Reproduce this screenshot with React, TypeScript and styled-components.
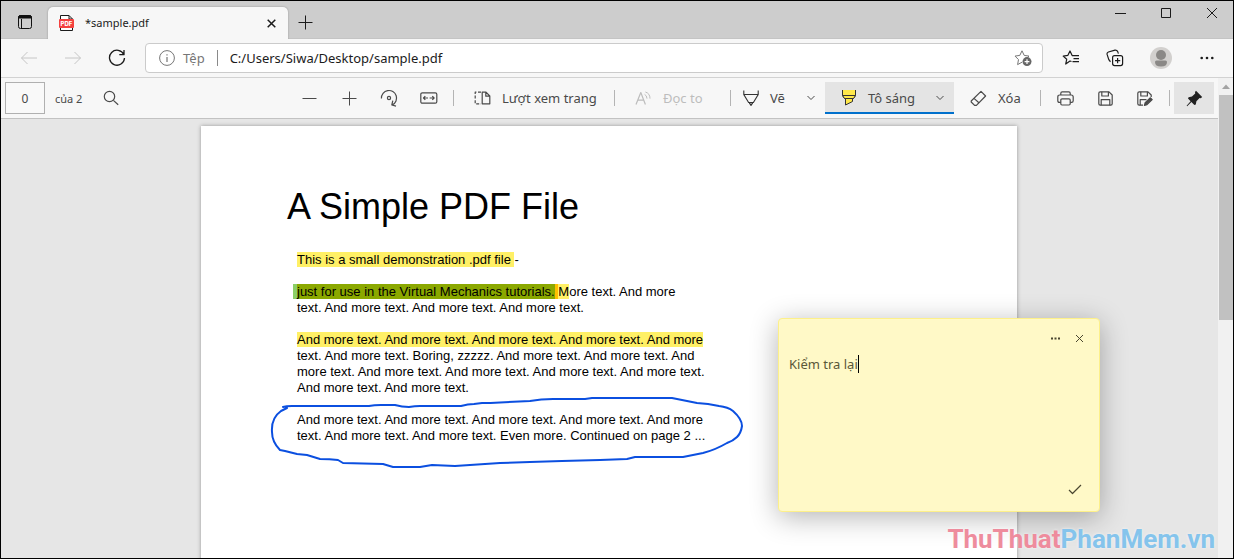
import React, { useState } from "react";
import styled, { createGlobalStyle, css } from "styled-components";

const UI_FONT = `"Noto Sans", "Open Sans", sans-serif`;
const DOC_FONT = `"Liberation Sans", Arial, sans-serif`;

const GlobalStyle = createGlobalStyle`
  * { box-sizing: border-box; }
  body { margin: 0; font-family: ${UI_FONT}; color: #1b1b1b; }
  button, input, textarea { font: inherit; color: inherit; }
`;

/* ---------- window ---------- */

const Window = styled.div`
  position: relative;
  display: flex;
  flex-direction: column;
  height: 100vh;
  overflow: hidden;
  border: 1px solid #000;
  background: #f7f7f7;
`;

const PlainButton = styled.button`
  display: flex;
  align-items: center;
  justify-content: center;
  flex: none;
  padding: 0;
  border: 0;
  background: none;
`;

const TitleBar = styled.header`
  display: flex;
  align-items: flex-end;
  height: 38px;
  background: #cdcdcd;
  border-bottom: 1px solid #c4c4c4;
`;

const TabActions = styled(PlainButton)`
  width: 47px;
  height: 32px;
`;

const Tab = styled.div`
  display: flex;
  align-items: center;
  width: 240px;
  height: 32px;
  margin-bottom: -1px;
  padding: 0 8px 0 11px;
  border-radius: 5px 5px 0 0;
  background: #f7f7f7;
  box-shadow: 0 0 2px rgba(0, 0, 0, 0.3);
  clip-path: inset(-3px -3px 0 -3px);
`;

const TabTitle = styled.span`
  flex: 1;
  margin-left: 11px;
  font-size: 11px;
  line-height: 16px;
`;

const TabClose = styled(PlainButton)`
  width: 18px;
  height: 18px;
`;

const NewTab = styled(PlainButton)`
  width: 34px;
  height: 32px;
`;

const WindowControls = styled.div`
  display: flex;
  align-self: flex-start;
  margin: 0 -2px 0 auto;
`;

const WindowButton = styled(PlainButton)`
  width: 46px;
  height: 24px;
`;

/* ---------- address row ---------- */

const AddressRow = styled.nav`
  display: flex;
  align-items: center;
  flex: none;
  height: 39px;
  padding: 0 4px 0 6px;
  border-bottom: 1px solid #d2d2d2;
`;

const NavButton = styled(PlainButton)<{ $muted?: boolean }>`
  width: 44px;
  height: 30px;
  color: ${(p) => (p.$muted ? "#c6c6c6" : "#1b1b1b")};
`;

const ProfileButton = styled(NavButton)`
  width: 48px;
`;

const AddressBox = styled.div`
  display: flex;
  align-items: center;
  flex: 1;
  min-width: 0;
  height: 30px;
  margin: 0 6px;
  padding: 0 10px 0 13px;
  border: 1px solid #cbcbcb;
  border-radius: 4px;
  background: #fff;
  font-size: 13px;
`;

const SiteInfo = styled.span`
  display: flex;
  align-items: center;
  gap: 8px;
  padding-right: 12px;
  color: #767676;
`;

const Bar = styled.span`
  width: 1px;
  height: 16px;
  background: #8a8a8a;
`;

const AddressInput = styled.input`
  flex: 1;
  min-width: 0;
  padding: 0 0 0 12px;
  border: 0;
  outline: 0;
  background: none;
`;

/* ---------- document area ---------- */

const Content = styled.div`
  display: flex;
  flex: 1;
  min-height: 0;
`;

const Reader = styled.div`
  display: flex;
  flex-direction: column;
  flex: 1;
  min-width: 0;
`;

const Toolbar = styled.div`
  display: flex;
  align-items: center;
  justify-content: space-between;
  flex: none;
  height: 41px;
  padding: 0 4px;
  border-bottom: 1px solid #c2c2c2;
  font-size: 13px;
  color: #4a4a4a;
`;

const ToolGroup = styled.div`
  display: flex;
  align-items: center;
`;

const PageNumber = styled.input`
  width: 40px;
  height: 32px;
  padding: 0;
  border: 1px solid #b0b0b0;
  background: #f9f9f9;
  font-size: 12px;
  text-align: center;
`;

const PageTotal = styled.label`
  margin: 0 9px 0 10px;
  font-size: 11px;
`;

const ToolButton = styled(PlainButton)<{
  $width?: number;
  $inset?: number;
  $disabled?: boolean;
  $active?: boolean;
  $lit?: boolean;
}>`
  justify-content: ${(p) => (p.$width ? "flex-start" : "center")};
  width: ${(p) => p.$width ?? 40}px;
  height: 32px;
  color: ${(p) => (p.$disabled ? "#bdbdbd" : "#4a4a4a")};
  background: ${(p) => (p.$lit || p.$active ? "#e4e4e4" : "none")};
  ${(p) =>
    p.$width &&
    css`
      padding: 0 9px 0 ${p.$inset ?? 16}px;
    `}
  ${(p) =>
    p.$active &&
    css`
      margin-right: 4px;
      box-shadow: inset 0 -2px #0070cc;
    `}
`;

const ToolLabel = styled.span`
  flex: 1;
  margin-left: 11px;
  text-align: left;
  white-space: nowrap;
`;

const Divider = styled.span`
  width: 1px;
  height: 16px;
  margin: 0 4px;
  background: #b4b4b4;
`;

const ScrollTrack = styled.div`
  display: flex;
  flex-direction: column;
  flex: none;
  width: 15px;
  background: #f1f1f1;
`;

const ScrollArrow = styled(PlainButton)`
  height: 17px;
`;

const ScrollThumb = styled.div`
  flex: none;
  height: 48%;
  max-height: 225px;
  margin-left: 1px;
  background: #c1c1c1;
`;

const Viewer = styled.main`
  flex: 1;
  min-height: 0;
  padding: 7px 1px 0 0;
  overflow: hidden;
  background: #e6e6e6;
`;

const Sheet = styled.article`
  position: relative;
  width: 816px;
  min-height: 1056px;
  margin: 0 auto;
  padding: 61px 86px 0;
  background: #fff;
  box-shadow: 0 0 4px rgba(0, 0, 0, 0.35);
  font-family: ${DOC_FONT};
  color: #000;
`;

const DocTitle = styled.h1`
  margin: 0 0 25px;
  font-size: 36px;
  font-weight: 400;
  line-height: 40px;
`;

const Paragraph = styled.p`
  margin: 0 0 16px 10px;
  font-size: 13px;
  line-height: 16px;
  white-space: nowrap;
`;

const marks = {
  yellow: "#fff066",
  green: "#8ba800",
  lightGreen: "#8ccf66",
  orange: "#ffbf00",
};

const Mark = styled.mark<{ $tone: keyof typeof marks }>`
  color: inherit;
  background: ${(p) => marks[p.$tone]};
`;

const GreenMark = styled(Mark)`
  margin-left: -4px;
  border-left: 4px solid ${marks.lightGreen};
`;

const Ink = styled.svg`
  position: absolute;
  left: 64px;
  top: 266px;
  pointer-events: none;
`;

/* ---------- sticky note ---------- */

const Note = styled.section`
  position: absolute;
  left: 577px;
  top: 192px;
  display: flex;
  flex-direction: column;
  width: 322px;
  height: 194px;
  padding: 8px 8px 11px 10px;
  border: 1px solid #fdf08a;
  border-radius: 4px;
  background: #fff9c7;
  box-shadow: 0 5px 28px rgba(0, 0, 0, 0.3);
  font-family: ${UI_FONT};
  color: #5a5738;
`;

const NoteActions = styled.div`
  display: flex;
  justify-content: flex-end;
`;

const NoteButton = styled(PlainButton)`
  width: 24px;
  height: 22px;
  color: #4a4730;
`;

const NoteBody = styled.div`
  display: flex;
  align-items: center;
  flex: none;
  height: 20px;
  margin-top: 5px;
`;

const NoteText = styled.textarea`
  field-sizing: content;
  padding: 0;
  border: 0;
  outline: 0;
  resize: none;
  overflow: hidden;
  background: none;
  font-size: 13px;
  line-height: 20px;
  caret-color: transparent;
`;

const Caret = styled.span`
  width: 1px;
  height: 18px;
  background: #000;
`;

const NoteFooter = styled.div`
  display: flex;
  justify-content: flex-end;
  margin-top: auto;
  padding-right: 4px;
`;

const Watermark = styled.div`
  position: absolute;
  right: 18px;
  bottom: 1px;
  font-family: Roboto, "Liberation Sans", sans-serif;
  font-size: 26px;
  font-weight: 700;
  line-height: 36px;
  color: #85c4ec;
  text-shadow: 0 0 3px rgba(255, 255, 255, 0.7);
  pointer-events: none;
`;

const WatermarkRed = styled.span`
  color: #ee8c9d;
`;

/* ---------- icons ---------- */

type IconProps = { w: number; h?: number; sw?: number; children: React.ReactNode };

const Icon = ({ w, h = w, sw = 1, children }: IconProps) => (
  <svg
    width={w}
    height={h}
    viewBox={`0 0 ${w} ${h}`}
    fill="none"
    stroke="currentColor"
    strokeWidth={sw}
    strokeLinejoin="round"
    aria-hidden="true"
  >
    {children}
  </svg>
);

const Chevron = () => (
  <Icon w={10} h={6}>
    <path d="M1.5 1L5 4.5L8.5 1" />
  </Icon>
);

const PdfIcon = () => (
  <svg width="15" height="17" viewBox="0 0 15 17" fill="none" aria-hidden="true">
    <path d="M1.5 15.5V0.5H10L13.5 4V15.5Z" fill="#fff" stroke="#1b1b1b" />
    <path d="M10 0.5V4H13.5" stroke="#1b1b1b" />
    <rect y="4" width="15" height="9" rx="1" fill="#f4413f" />
    <text
      x="7.5"
      y="11"
      fill="#fff"
      fontFamily="Inter, sans-serif"
      fontSize="6"
      fontWeight="800"
      textAnchor="middle"
    >
      PDF
    </text>
  </svg>
);

const DocumentText = () => (
  <>
    <DocTitle>A Simple PDF File</DocTitle>
    <Paragraph>
      <Mark $tone="yellow">This is a small demonstration .pdf file </Mark>-
    </Paragraph>
    <Paragraph>
      <GreenMark $tone="green">just for use in the Virtual Mechanics tutorials.</GreenMark>
      <Mark $tone="orange"> </Mark>
      <Mark $tone="yellow">M</Mark>ore text. And more
      <br />
      text. And more text. And more text. And more text.
    </Paragraph>
    <Paragraph>
      <Mark $tone="yellow">And more text. And more text. And more text. And more text. And more</Mark>
      <br />
      text. And more text. Boring, zzzzz. And more text. And more text. And
      <br />
      more text. And more text. And more text. And more text. And more text.
      <br />
      And more text. And more text.
    </Paragraph>
    <Paragraph>
      And more text. And more text. And more text. And more text. And more
      <br />
      text. And more text. And more text. Even more. Continued on page 2 ...
    </Paragraph>
  </>
);

const InkLoop = () => (
  <Ink width="484" height="80" viewBox="265 392 484 80" fill="none" aria-hidden="true">
    <path
      d="M283 407Q286 406 292 406H369Q374 405 381 405H395Q402 407 409 407Q415 406 420 406H461Q468 404 474 404L482 403Q490 403 500 402.5L530 401Q541 399 553 399H585L592 398H672L697 403L708 404L719 406Q728 407 733 411Q742 419 742 426Q741 433 737 437Q733 441 727 443Q715 450 703 453L683 457H635L627 459L600 460L562 461L530 462L500 463L455 466L432 465L420 467H393L383 464L343 463L338 460Q330 459 320 459L307 455L297 454L285 451L280 450Q272 442 272 432Q271 418 281 411L287 408"
      stroke="#0b4fe0"
      strokeWidth="2"
      strokeLinecap="round"
      strokeLinejoin="round"
    />
  </Ink>
);

/* ---------- app ---------- */

export default function App() {
  const [address, setAddress] = useState("C:/Users/Siwa/Desktop/sample.pdf");
  const [page, setPage] = useState("0");
  const [note, setNote] = useState("Kiểm tra lại");

  return (
    <>
      <GlobalStyle />
      <Window>
        <TitleBar>
          <TabActions aria-label="Tab actions">
            <Icon w={16} sw={1}>
              <rect x="1.5" y="1.5" width="13" height="13" rx="2" stroke="#111" />
              <path d="M1.5 4V3.5a2 2 0 0 1 2-2h9a2 2 0 0 1 2 2V4Z" fill="#111" stroke="#111" />
              <path d="M4.5 5V14.5" stroke="#111" />
            </Icon>
          </TabActions>
          <Tab>
            <PdfIcon />
            <TabTitle>*sample.pdf</TabTitle>
            <TabClose aria-label="Close tab">
              <Icon w={9} sw={1.5}>
                <path d="M0.7 0.7L8.3 8.3M8.3 0.7L0.7 8.3" />
              </Icon>
            </TabClose>
          </Tab>
          <NewTab aria-label="New tab">
            <Icon w={15}>
              <path d="M7.5 0.5V14.5M0.5 7.5H14.5" />
            </Icon>
          </NewTab>
          <WindowControls>
            <WindowButton aria-label="Minimize">
              <Icon w={11}>
                <path d="M0 5.5H11" />
              </Icon>
            </WindowButton>
            <WindowButton aria-label="Maximize">
              <Icon w={10}>
                <path d="M0.5 0.5H9.5V9.5H0.5Z" />
              </Icon>
            </WindowButton>
            <WindowButton aria-label="Close">
              <Icon w={12}>
                <path d="M1 1L11 11M11 1L1 11" />
              </Icon>
            </WindowButton>
          </WindowControls>
        </TitleBar>

        <AddressRow>
          <NavButton $muted aria-label="Back">
            <Icon w={18} h={14}>
              <path d="M17 7H1.5M7.5 1L1.5 7L7.5 13" />
            </Icon>
          </NavButton>
          <NavButton $muted aria-label="Forward">
            <Icon w={18} h={14}>
              <path d="M1 7H16.5M10.5 1L16.5 7L10.5 13" />
            </Icon>
          </NavButton>
          <NavButton aria-label="Refresh">
            <Icon w={18} sw={1.3}>
              <path d="M15.8 5.5A7.5 7.5 0 1 0 16.5 9M16 1V5.7H11.3" />
            </Icon>
          </NavButton>
          <AddressBox>
            <SiteInfo>
              <Icon w={16}>
                <circle cx="8" cy="8" r="7.4" />
                <path d="M8 7V12M8 4.2V5.6" strokeWidth="1.2" />
              </Icon>
              <span>Tệp</span>
            </SiteInfo>
            <Bar />
            <AddressInput
              aria-label="Address"
              value={address}
              onChange={(e) => setAddress(e.target.value)}
            />
            <PlainButton aria-label="Add to favorites">
              <svg width="18" height="18" viewBox="0 0 18 18" fill="none" aria-hidden="true">
                <path
                  d="M8 13.2L3.6 15.6L4.5 10.6L1 7.1L5.8 6.4L8 1.8L10.2 6.4L15 7.1L13.6 8.4"
                  stroke="#767676"
                  strokeLinejoin="round"
                />
                <circle cx="13" cy="12.6" r="4.5" fill="#666" />
                <path d="M13 10.2V15M10.6 12.6H15.4" stroke="#fff" strokeWidth="1.2" />
              </svg>
            </PlainButton>
          </AddressBox>
          <NavButton aria-label="Favorites">
            <Icon w={18} sw={1.2}>
              <path d="M9.5 12.5L8 12L3.7 15L4.7 10.3L1.2 7.1L5.9 6.3L8 2L10 6.3L11.5 6.5" />
              <path d="M10 6.7H17M11.5 9.7H17M10.5 12.7H17" />
            </Icon>
          </NavButton>
          <NavButton aria-label="Collections">
            <Icon w={18} sw={1.2}>
              <rect x="6.6" y="6.6" width="10" height="10" rx="2" />
              <path d="M11.6 9V14.2M9 11.6H14.2" />
              <path d="M4.6 12.6Q3.4 12 2.8 10.6L1.1 5.4Q0.7 3.6 2.4 3L9 1.2Q10.8 1 11.6 2.4L12.4 4.6" />
            </Icon>
          </NavButton>
          <ProfileButton aria-label="Profile">
            <svg width="22" height="22" viewBox="0 0 22 22" aria-hidden="true">
              <circle cx="11" cy="11" r="11" fill="#d2d0ce" />
              <circle cx="11" cy="8" r="5" fill="#8a8886" />
              <path d="M5 15Q5 13.5 6.5 13.5H15.5Q17 13.5 17 15Q17 19.5 11 19.5Q5 19.5 5 15Z" fill="#8a8886" />
            </svg>
          </ProfileButton>
          <NavButton aria-label="Settings and more">
            <svg width="14" height="4" viewBox="0 0 14 4" fill="#1b1b1b" aria-hidden="true">
              <circle cx="1.7" cy="2" r="1.3" />
              <circle cx="7" cy="2" r="1.3" />
              <circle cx="12.3" cy="2" r="1.3" />
            </svg>
          </NavButton>
        </AddressRow>

        <Content>
          <Reader>
            <Toolbar role="toolbar">
              <ToolGroup>
                <PageNumber id="page" value={page} onChange={(e) => setPage(e.target.value)} />
                <PageTotal htmlFor="page">của 2</PageTotal>
                <ToolButton aria-label="Find">
                  <Icon w={16} sw={1.2}>
                    <circle cx="6.5" cy="6.5" r="5.2" />
                    <path d="M10.4 10.4L15.2 14.8" />
                  </Icon>
                </ToolButton>
              </ToolGroup>
              <ToolGroup>
                <ToolButton aria-label="Zoom out">
                  <Icon w={15}>
                    <path d="M0.5 7.5H14.5" />
                  </Icon>
                </ToolButton>
                <ToolButton aria-label="Zoom in">
                  <Icon w={15}>
                    <path d="M0.5 7.5H14.5M7.5 0.5V14.5" />
                  </Icon>
                </ToolButton>
                <ToolButton aria-label="Rotate">
                  <Icon w={18} sw={1.2}>
                    <path d="M1.4 9.4A7.6 7.6 0 1 1 12.4 15.9M12.8 11.6L11.8 16L16 17.2" />
                    <circle cx="9" cy="9" r="1.6" />
                  </Icon>
                </ToolButton>
                <ToolButton aria-label="Fit to width">
                  <Icon w={18} h={12} sw={1.2}>
                    <rect x="0.8" y="0.8" width="16" height="10.4" rx="1.5" />
                    <path d="M3.6 6H8M5.3 4.2L3.5 6L5.3 7.8M14 6H9.6M12.3 4.2L14.1 6L12.3 7.8" />
                  </Icon>
                </ToolButton>
                <Divider />
                <ToolButton $width={152}>
                  <Icon w={17} h={14} sw={1.2}>
                    <path d="M7 1.2H1.2V12.8H7" strokeDasharray="3 1.6" />
                    <path d="M8.2 1.2H12L15.8 5V12.8H8.2ZM11.8 1.2V5.2H15.8" />
                  </Icon>
                  <ToolLabel>Lượt xem trang</ToolLabel>
                </ToolButton>
                <Divider />
                <ToolButton $width={107} $disabled>
                  <Icon w={17} h={16} sw={1.2}>
                    <path d="M1 14.5L5.8 2.5L10.4 14.5M2.8 10.2H8.8" />
                    <path d="M9.6 4.4Q11.8 5.4 12 8.6M10.4 2Q15 3.4 15 8.6" strokeWidth="1" />
                  </Icon>
                  <ToolLabel>Đọc to</ToolLabel>
                </ToolButton>
                <Divider />
                <ToolButton $width={90} $inset={8}>
                  <svg width="16" height="16" viewBox="0 0 16 16" fill="none" stroke="#333" aria-hidden="true">
                    <path d="M0.8 0.5V4.5L5.6 12.5H10.4L15.2 4.5V0.5M0.8 4.5H15.2" strokeWidth="1.1" />
                    <path d="M5.8 12.5L8 15.4L10.2 12.5" />
                    <path d="M7 14L8 15.4L9 14Z" fill="#333" />
                  </svg>
                  <ToolLabel>Vẽ</ToolLabel>
                  <Chevron />
                </ToolButton>
                <ToolButton $width={129} $active>
                  <svg width="16" height="16" viewBox="0 0 16 16" fill="#ffe84a" stroke="#333" aria-hidden="true">
                    <path d="M1.5 0H14.5V5.5H1.5Z" stroke="none" />
                    <path d="M1.5 0V5.5L3.5 8.5H12.5L14.5 5.5V0" fill="none" />
                    <path d="M1.5 5.5H14.5L12.5 8.5H3.5Z" />
                    <path d="M4.5 8.5V15L11.5 11.5V8.5Z" />
                  </svg>
                  <ToolLabel>Tô sáng</ToolLabel>
                  <Chevron />
                </ToolButton>
                <ToolButton $width={78} $inset={12}>
                  <Icon w={17} h={17} sw={1.2}>
                    <path d="M1.2 11L11 1.4L15.6 6L6.4 15.4H4.6L1.2 12Z" />
                    <path d="M4 8.4L9.2 13" />
                  </Icon>
                  <ToolLabel>Xóa</ToolLabel>
                </ToolButton>
                <Divider />
                <ToolButton aria-label="Print">
                  <Icon w={17} h={15} sw={1.2}>
                    <path d="M3.8 4V2.2Q3.8 0.8 5.2 0.8H11.8Q13.2 0.8 13.2 2.2V4M3.8 11.4H2.4Q0.8 11.4 0.8 9.8V6Q0.8 4 2.8 4H14.2Q16.2 4 16.2 6V9.8Q16.2 11.4 14.6 11.4H13.2" />
                    <rect x="3.8" y="7.8" width="9.4" height="6.2" rx="1.2" />
                  </Icon>
                </ToolButton>
                <ToolButton aria-label="Save">
                  <Icon w={15} sw={1.2}>
                    <path d="M0.8 2.2Q0.8 0.8 2.2 0.8H11L14.2 4V12.8Q14.2 14.2 12.8 14.2H2.2Q0.8 14.2 0.8 12.8Z" />
                    <path d="M3.8 0.8V5H10.4V0.8M3.2 14.2V8.6H11.8V14.2" />
                  </Icon>
                </ToolButton>
                <ToolButton aria-label="Save as">
                  <Icon w={16} h={15} sw={1.2}>
                    <path d="M6 14.2H2.2Q0.8 14.2 0.8 12.8V2.2Q0.8 0.8 2.2 0.8H11L14.2 4V6" />
                    <path d="M3.8 0.8V5H10.4V0.8M3.2 14.2V8.6H9.5" />
                    <path d="M7.4 14.4L8.2 11.6L13.4 6.8L15.2 8.6L10 13.6Z" fill="currentColor" />
                  </Icon>
                </ToolButton>
                <Divider />
                <ToolButton $lit aria-label="Unpin toolbar">
                  <svg width="17" height="17" viewBox="0 0 17 17" fill="#222" aria-hidden="true">
                    <path d="M10 0.8L16.2 7L14.8 8.2L13.6 8L10.4 11.2L9.8 14.4L8.4 15L5.4 12L1.2 16.2L0.6 15.8L4.6 11.2L2 8.4L2.6 7.2L6 6.6L9.2 3.4L9 2Z" />
                  </svg>
                </ToolButton>
              </ToolGroup>
            </Toolbar>
            <Viewer>
              <Sheet>
                <DocumentText />
                <InkLoop />
                <Note aria-label="Comment">
                  <NoteActions>
                    <NoteButton aria-label="More options">
                      <svg width="9" height="3" viewBox="0 0 9 3" fill="currentColor" aria-hidden="true">
                        <path d="M0 0.5H2V2.5H0ZM3.5 0.5H5.5V2.5H3.5ZM7 0.5H9V2.5H7Z" />
                      </svg>
                    </NoteButton>
                    <NoteButton aria-label="Close comment">
                      <Icon w={9}>
                        <path d="M1 1L8 8M8 1L1 8" />
                      </Icon>
                    </NoteButton>
                  </NoteActions>
                  <NoteBody>
                    <NoteText
                      aria-label="Comment text"
                      rows={1}
                      value={note}
                      onChange={(e) => setNote(e.target.value)}
                    />
                    <Caret />
                  </NoteBody>
                  <NoteFooter>
                    <NoteButton aria-label="Save comment">
                      <Icon w={14} h={11} sw={1.2}>
                        <path d="M1 6L4.5 9.5L13 1" />
                      </Icon>
                    </NoteButton>
                  </NoteFooter>
                </Note>
              </Sheet>
            </Viewer>
          </Reader>
          <ScrollTrack>
            <ScrollArrow aria-label="Scroll up">
              <svg width="8" height="5" viewBox="0 0 8 5" aria-hidden="true">
                <path d="M0 5L4 0.5L8 5Z" fill="#a3a3a3" />
              </svg>
            </ScrollArrow>
            <ScrollThumb />
          </ScrollTrack>
        </Content>

        <Watermark>
          <WatermarkRed>ThuThuat</WatermarkRed>PhanMem.vn
        </Watermark>
      </Window>
    </>
  );
}
